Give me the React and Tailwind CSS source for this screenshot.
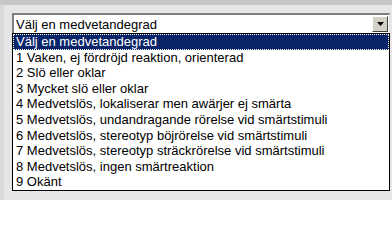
const options = [
  '1 Vaken, ej fördröjd reaktion, orienterad',
  '2 Slö eller oklar',
  '3 Mycket slö eller oklar',
  '4 Medvetslös, lokaliserar men awärjer ej smärta',
  '5 Medvetslös, undandragande rörelse vid smärtstimuli',
  '6 Medvetslös, stereotyp böjrörelse vid smärtstimuli',
  '7 Medvetslös, stereotyp sträckrörelse vid smärtstimuli',
  '8 Medvetslös, ingen smärtreaktion',
  '9 Okänt',
]

export default function App() {
  return (
    <div className="w-[392px] h-[200px] overflow-hidden bg-[#e6e6e6] font-['Liberation_Sans',Arial,sans-serif] text-[13px] text-black">
      <div className="h-[5px] bg-[#c6c6c6]" />
      <div className="flex h-[195px]">
        <div className="w-[4px] bg-[#dadada]" />
        <div className="pl-[8px] pt-[8px]">
          {/* select box */}
          <div className="flex items-center w-[378px] h-[20px] bg-white border-t-2 border-l-2 border-t-[#808080] border-l-[#808080] border-r border-r-[#e0e0e0]">
            <span className="flex-1 pl-[2px] leading-none">Välj en medvetandegrad</span>
            <div className="flex items-center justify-center w-[16px] h-[16px] mr-px bg-[#d4d0c8] border border-t-white border-l-white border-r-[#404040] border-b-[#404040]">
              <svg width="7" height="4" viewBox="0 0 7 4">
                <path d="M0 0h7L3.5 4z" fill="#000" />
              </svg>
            </div>
          </div>
          {/* open list */}
          <ul className="w-[378px] border border-black bg-white">
            <li className="h-[15.6px] pl-[3px] flex items-center bg-[#0a246a] text-white outline-1 outline-dotted outline-offset-[-1px] outline-white">
              Välj en medvetandegrad
            </li>
            {options.map((o) => (
              <li key={o} className="h-[15.6px] pl-[3px] flex items-center whitespace-nowrap">
                {o}
              </li>
            ))}
          </ul>
        </div>
      </div>
    </div>
  )
}
